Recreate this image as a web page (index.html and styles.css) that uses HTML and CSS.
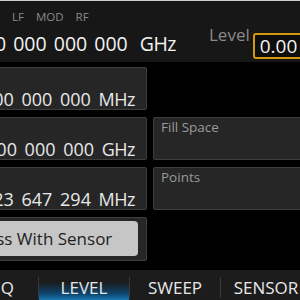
FILE: index.html
```html
<!DOCTYPE html>
<html>
<head>
<meta charset="utf-8">
<link rel="stylesheet" href="styles.css">
</head>
<body>
<div class="screen">
  <div class="topline"></div>
  <header class="header">
    <div class="hleft">
      <div class="modes"><span>LF</span><span>MOD</span><span>RF</span></div>
      <div class="bigfreq">0 000 000 000<span class="unit">GHz</span></div>
    </div>
    <div class="level-label">Level</div>
    <div class="level-box">0.00 dBm</div>
  </header>
  <main class="main">
    <div class="card freq r1">1 000 000 000 <span class="u">MHz</span></div>
    <div class="card freq r2">10 000 000 000 <span class="u">GHz</span></div>
    <div class="card label r2c2">Fill Space</div>
    <div class="card freq r3">123 647 294 <span class="u">MHz</span></div>
    <div class="card label r3c2">Points</div>
    <div class="card btncard r4"><div class="btn">Flatness With Sensor</div></div>
  </main>
  <nav class="tabs">
    <div class="tab">FREQ</div>
    <div class="sep"></div>
    <div class="tab active">LEVEL</div>
    <div class="sep"></div>
    <div class="tab">SWEEP</div>
    <div class="sep"></div>
    <div class="tab">SENSOR</div>
  </nav>
</div>
</body>
</html>
```
FILE: styles.css
```css
html, body {
  margin: 0;
  padding: 0;
  background: #000;
}
body {
  width: 300px;
  height: 300px;
  overflow: hidden;
  font-family: "Open Sans", "Noto Sans", sans-serif;
}
.screen {
  width: 300px;
  height: 300px;
  display: flex;
  flex-direction: column;
  overflow: hidden;
}
.topline {
  height: 1px;
  background: #cfcfcf;
  flex: none;
}
.header {
  height: 61px;
  flex: none;
  display: flex;
  align-items: flex-start;
  background: #171717;
  overflow: hidden;
}
.hleft {
  width: 209px;
  flex: none;
  padding-top: 8px;
}
.modes {
  display: flex;
  gap: 12px;
  padding-left: 12px;
  font-size: 11.5px;
  line-height: 15px;
  color: #8a8a8a;
}
.bigfreq {
  margin-top: 8px;
  margin-left: -5px;
  font-size: 19.5px;
  line-height: 24px;
  color: #f2f2f2;
  white-space: nowrap;
  word-spacing: 2px;
}
.unit {
  margin-left: 12px;
  letter-spacing: -0.5px;
}
.level-label {
  margin-top: 23px;
  font-size: 17px;
  line-height: 22px;
  color: #8a8a8a;
  flex: none;
}
.level-box {
  flex: none;
  margin-top: 32px;
  margin-left: 3px;
  width: 90px;
  height: 22px;
  border: 2px solid #d49a0c;
  border-radius: 3px;
  background: #0e0e0e;
  padding-left: 5px;
  font-size: 19px;
  line-height: 22px;
  color: #f2f2f2;
  white-space: nowrap;
}
.main {
  flex: none;
  height: 198px;
  padding-top: 5px;
  margin-left: -82px;
  display: grid;
  grid-template-columns: 229px 170px;
  grid-template-rows: 43px 43px 43px 44px;
  column-gap: 6px;
  row-gap: 7px;
}
.card {
  background: #262626;
  border: 1px solid #3e3e3e;
  border-radius: 2px;
  box-sizing: border-box;
}
.freq {
  grid-column: 1;
  padding: 20px 11px 0 0;
  text-align: right;
  font-size: 18px;
  line-height: 22px;
  color: #e8e8e8;
  white-space: nowrap;
  word-spacing: 3px;
}
.u {
  letter-spacing: -0.5px;
}
.r1 { grid-row: 1; }
.r2 { grid-row: 2; }
.r3 { grid-row: 3; }
.r4 { grid-row: 4; grid-column: 1; }
.label {
  grid-column: 2;
  padding: 0 7px;
  font-size: 13.5px;
  line-height: 18px;
  color: #9a9a9a;
}
.r2c2 { grid-row: 2; }
.r3c2 { grid-row: 3; }
.btncard {
  padding: 3px 8px 4px 3px;
  display: flex;
}
.btn {
  flex: 1;
  background: #c6c6c6;
  border-radius: 4px;
  color: #1e1e1e;
  font-size: 17px;
  line-height: 35px;
  text-align: center;
  white-space: nowrap;
}
.tabs {
  flex: none;
  margin-top: 5px;
  height: 35px;
  margin-left: -52px;
  display: flex;
  background: #1c1c1c;
}
.tab {
  width: 90px;
  flex: none;
  text-align: center;
  font-size: 17px;
  line-height: 35px;
  color: #e8e8e8;
}
.tab.active {
  background: linear-gradient(to bottom, rgba(0,0,0,0) 35%, #0c4670 68%, #22a0e6 100%);
}
.sep {
  width: 1px;
  flex: none;
  margin: 7px 0;
  background: #3a3a3a;
}
```
